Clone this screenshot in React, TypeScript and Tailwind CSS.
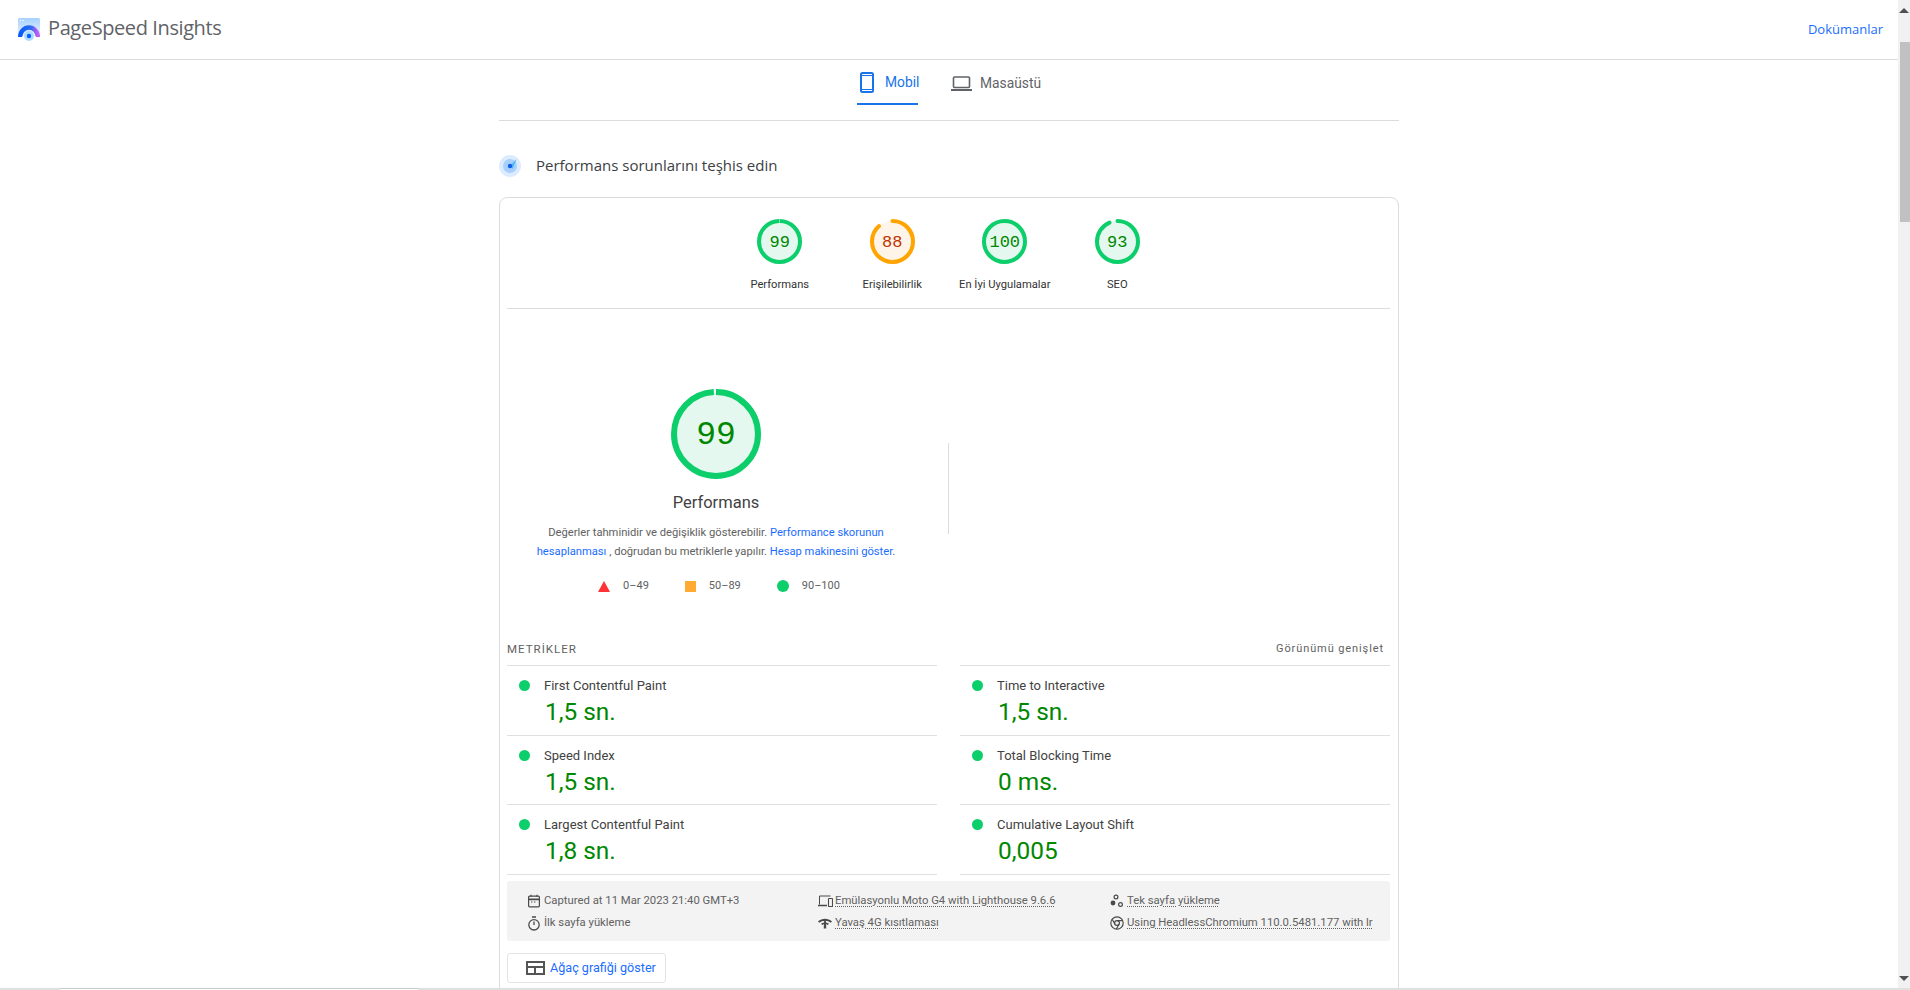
import type { ReactNode } from "react";

const GREEN = "#0cce6b";
const ORANGE = "#ffa400";

interface GaugeProps {
  score: number;
  size: number;
  stroke: number;
  fill: string;
  color: string;
  textClass: string;
}

function Gauge({ score, size, stroke, fill, color, textClass }: GaugeProps) {
  const r = (size - stroke) / 2;
  const c = 2 * Math.PI * r;
  const len = (score / 100) * c;
  const mid = size / 2;
  // only the lower scores have a gap big enough to show the round caps
  const cap = score < 95 ? "round" : "butt";
  return (
    <div className="grid place-items-center" style={{ width: size, height: size }}>
      <svg width={size} height={size} className="col-start-1 row-start-1">
        <circle cx={mid} cy={mid} r={r} fill={fill} stroke="none" />
        <g transform={`rotate(-90 ${mid} ${mid})`}>
          <circle
            cx={mid}
            cy={mid}
            r={r}
            fill="none"
            stroke={color}
            strokeWidth={stroke}
            strokeLinecap={cap}
            strokeDasharray={`${len} ${c}`}
          />
        </g>
      </svg>
      <span className={`col-start-1 row-start-1 font-['Liberation_Mono',monospace] ${textClass}`}>{score}</span>
    </div>
  );
}

function Logo() {
  return (
    <svg width="23" height="23" viewBox="0 0 23 23" className="shrink-0">
      <defs>
        <linearGradient id="top" x1="0" y1="0" x2="0" y2="1">
          <stop offset="0" stopColor="#a5d2ff" />
          <stop offset="1" stopColor="#e8f3ff" />
        </linearGradient>
        <linearGradient id="arc" x1="0" y1="0" x2="1" y2="0">
          <stop offset="0" stopColor="#0a5cff" />
          <stop offset="0.6" stopColor="#2a6cf0" />
          <stop offset="1" stopColor="#c45cf5" />
        </linearGradient>
      </defs>
      <path d="M0 1.500A1.500 1.500 0 0 1 1.500 0h19A1.500 1.500 0 0 1 22 1.500V18H0z" fill="url(#top)" />
      <circle cx="2.500" cy="2.500" r="0.700" fill="#fff" />
      <circle cx="5" cy="2.500" r="0.700" fill="#fff" />
      <path d="M2.200 19a8.800 9.500 0 0 1 17.600 0" fill="none" stroke="url(#arc)" strokeWidth="4.400" />
      <rect x="4.400" y="18" width="13.200" height="5" fill="#fff" />
      <circle cx="11" cy="18" r="5" fill="#a9dcff" />
      <circle cx="11" cy="18" r="2.200" fill="#0a5cff" />
    </svg>
  );
}

function PhoneIcon() {
  return (
    <svg width="14" height="21" viewBox="0 0 14 21" fill="none" stroke="#1a73e8" className="shrink-0">
      <rect x="1" y="1" width="12" height="19" rx="1.500" strokeWidth="2" />
      <path d="M1 3.500h12M1 17.500h12" strokeWidth="1" />
    </svg>
  );
}

function LaptopIcon() {
  return (
    <svg width="21" height="15" viewBox="0 0 21 15" fill="none" className="shrink-0">
      <rect x="2.500" y="1" width="16" height="10.500" rx="1" stroke="#5f6368" strokeWidth="1.600" />
      <rect x="0" y="13" width="21" height="2" fill="#5f6368" />
    </svg>
  );
}

function DiagnoseIcon() {
  return (
    <svg width="22" height="22" viewBox="0 0 22 22" className="shrink-0">
      <circle cx="11" cy="11" r="11" fill="#dcecfe" />
      <circle cx="11" cy="11" r="7" fill="#a9d0fb" />
      <path d="M11 11L17.500 4 13.500 14z" fill="#4db4f7" />
      <circle cx="11" cy="11" r="2.200" fill="#0b5fe8" />
    </svg>
  );
}

function CalendarIcon() {
  return (
    <svg width="14" height="14" viewBox="0 0 14 14" fill="none" stroke="#4a4a4a" strokeWidth="1.200">
      <rect x="1.600" y="2.200" width="10.800" height="10.600" rx="1" />
      <path d="M1.600 5.400h10.800" strokeWidth="1.600" />
      <path d="M4 .800v2M10 .800v2" />
      <path d="M4 8h1.400M7 8h1.400" />
    </svg>
  );
}

function TimerIcon() {
  return (
    <svg width="14" height="15" viewBox="0 0 14 15" fill="none" stroke="#4a4a4a" strokeWidth="1.300">
      <circle cx="7" cy="8.800" r="5.200" />
      <path d="M5 1h4M7 5.600v3.400" />
    </svg>
  );
}

function DevicesIcon() {
  return (
    <svg width="15" height="12" viewBox="0 0 15 12" fill="none" stroke="#4a4a4a">
      <path d="M1.500 9.500V1h11" strokeWidth="1" />
      <path d="M0 10.500h9" strokeWidth="1.300" />
      <rect x="10.500" y="3.500" width="4" height="8" rx=".5" strokeWidth="1.100" />
    </svg>
  );
}

function WifiIcon() {
  return (
    <svg width="14" height="12" viewBox="0 0 14 12" fill="#4a4a4a">
      <path d="M0 4.600C3.800.8 10.200.8 14 4.600l-1.200 1.200C9.600 3 4.400 3 1.200 5.800z" />
      <path d="M3 6.800c2.400-1.900 5.600-1.900 8 0l-1.300 1.100C8 6.700 6 6.700 4.300 7.900z" />
      <path d="M6.200 2.500h1.600l.5 9H5.700z" />
    </svg>
  );
}

function SessionIcon() {
  return (
    <svg width="14" height="14" viewBox="0 0 14 14" fill="none" stroke="#4a4a4a" strokeWidth="1.200">
      <circle cx="6" cy="3" r="1.900" />
      <circle cx="3" cy="9" r="2.400" fill="#4a4a4a" stroke="none" />
      <circle cx="10.500" cy="10.500" r="1.900" />
    </svg>
  );
}

function ChromeIcon() {
  return (
    <svg width="14" height="14" viewBox="0 0 14 14" fill="none" stroke="#4a4a4a" strokeWidth="1.200">
      <circle cx="7" cy="7" r="6.200" />
      <circle cx="7" cy="7" r="2.400" />
      <path d="M7 4.600h5.600M4.900 8.200L2.200 3.300M9.100 8.200L6.300 13" />
    </svg>
  );
}

function TreemapIcon() {
  return (
    <svg width="19" height="14" viewBox="0 0 19 14" fill="none" stroke="#555" strokeWidth="2">
      <rect x="1" y="1" width="17" height="12" />
      <path d="M1 6h17M9 6v7" />
    </svg>
  );
}

const categories = [
  { score: 99, label: "Performans", fill: "#e5f8ef", color: GREEN, text: "text-[#008800]" },
  { score: 88, label: "Erişilebilirlik", fill: "#fff4e8", color: ORANGE, text: "text-[#c33300]" },
  { score: 100, label: "En İyi Uygulamalar", fill: "#e5f8ef", color: GREEN, text: "text-[#008800]" },
  { score: 93, label: "SEO", fill: "#e5f8ef", color: GREEN, text: "text-[#008800]" },
];

const metrics = [
  { name: "First Contentful Paint", value: "1,5 sn." },
  { name: "Time to Interactive", value: "1,5 sn." },
  { name: "Speed Index", value: "1,5 sn." },
  { name: "Total Blocking Time", value: "0 ms." },
  { name: "Largest Contentful Paint", value: "1,8 sn." },
  { name: "Cumulative Layout Shift", value: "0,005" },
];

function InfoItem({ icon, text, dotted }: { icon: ReactNode; text: string; dotted?: boolean }) {
  return (
    <div className="flex items-center h-[22px]">
      <span className="w-[17px] flex items-center shrink-0">{icon}</span>
      <span className={`whitespace-nowrap ${dotted ? "underline decoration-dotted underline-offset-2" : ""}`}>{text}</span>
    </div>
  );
}

export default function App() {
  return (
    <div className="w-[1910px] h-[990px] overflow-hidden flex flex-col bg-white font-['Roboto',sans-serif]">
      <div className="flex flex-1 min-h-0">
        <div className="flex-1 min-w-0 overflow-hidden">
          <header className="h-[60px] border-b border-[#dadce0] flex items-center pl-[18px] pr-[15px]">
            <Logo />
            <span className="ml-[7px] -mt-[3px] text-[20px] text-[#5f6368] font-['Open_Sans',sans-serif] tracking-[-0.4px]">PageSpeed Insights</span>
            <a className="ml-auto text-[13px] font-medium text-[#1a6dff] font-['Open_Sans',sans-serif]">Dokümanlar</a>
          </header>

          <div className="w-[900px] mx-auto">
            <nav className="h-[61px] border-b border-[#dadce0] flex justify-center">
              <div className="flex items-start gap-[33px]">
                <div className="w-[61px] h-[45px] border-b-2 border-[#1a73e8] flex items-center gap-[11px] pl-[3px] pt-[1px]">
                  <PhoneIcon />
                  <span className="text-[13.800px] text-[#1a73e8]">Mobil</span>
                </div>
                <div className="h-[45px] flex items-center gap-[8px] pt-[1px]">
                  <LaptopIcon />
                  <span className="text-[13.800px] text-[#5f6368]">Masaüstü</span>
                </div>
              </div>
            </nav>

            <div className="h-[76px] flex items-center pt-[13px]">
              <DiagnoseIcon />
              <span className="ml-[15px] text-[15px] text-[#3c4043] font-['Open_Sans',sans-serif]">Performans sorunlarını teşhis edin</span>
            </div>

            <section className="border border-[#dadce0] rounded-lg pl-[7px] pr-[8px] h-[900px]">
              <div className="h-[111px] border-b border-[#dadce0] flex justify-center pt-[21px]">
                <div className="flex">
                  {categories.map((cat) => (
                    <div key={cat.label} className="w-[112.500px] flex flex-col items-center">
                      <Gauge score={cat.score} size={45} stroke={4} fill={cat.fill} color={cat.color} textClass={`pt-[2px] text-[17px] ${cat.text}`} />
                      <span className="mt-[13px] text-[11.200px] text-[#333333] whitespace-nowrap">{cat.label}</span>
                    </div>
                  ))}
                </div>
              </div>

              <div className="flex items-start pt-[80px] h-[330px]">
                <div className="w-[418px] flex flex-col items-center shrink-0">
                  <Gauge score={99} size={90} stroke={6} fill="#e5f8ef" color={GREEN} textClass="pt-[4px] text-[33px] text-[#008800]" />
                  <h2 className="mt-[14px] text-[16.500px] leading-[20px] text-[#424242]">Performans</h2>
                  <div className="mt-[10px] text-[11.200px] leading-[19px] text-[#616161] text-center whitespace-nowrap">
                    <p>
                      Değerler tahminidir ve değişiklik gösterebilir. <a className="text-[#1a6dff]">Performance skorunun</a>
                    </p>
                    <p>
                      <a className="text-[#1a6dff]">hesaplanması</a> , doğrudan bu metriklerle yapılır. <a className="text-[#1a6dff]">Hesap makinesini göster</a>.
                    </p>
                  </div>
                  <div className="mt-[17px] ml-[6px] flex items-center text-[11px] text-[#616161]">
                    <span className="w-0 h-0 border-x-[6px] border-x-transparent border-b-[11px] border-b-[#ff3333]" />
                    <span className="ml-[13px]">0–49</span>
                    <span className="ml-[36px] w-[11px] h-[11px] bg-[#ffaa33]" />
                    <span className="ml-[13px]">50–89</span>
                    <span className="ml-[36px] w-[12px] h-[12px] rounded-full bg-[#0cce6b]" />
                    <span className="ml-[13px]">90–100</span>
                  </div>
                </div>
                <div className="ml-[23px] mt-[54px] w-px h-[91px] bg-[#dadce0]" />
              </div>

              <div className="flex justify-between items-center h-[26px] pb-[5px] pr-[6px] text-[#616161]">
                <span className="text-[11.500px] tracking-[1px]">METRİKLER</span>
                <span className="text-[11px] tracking-[0.9px]">Görünümü genişlet</span>
              </div>

              <div className="grid grid-cols-2 gap-x-[23px]">
                {metrics.map((m) => (
                  <div key={m.name} className="h-[69.700px] border-t border-[#e0e0e0] pt-[11px] pl-[12px] flex">
                    <span className="mt-[3px] w-[11px] h-[11px] rounded-full bg-[#0cce6b] shrink-0" />
                    <div className="ml-[14px]">
                      <div className="text-[13px] leading-[18px] text-[#424242]">{m.name}</div>
                      <div className="mt-[3px] ml-px text-[24.400px] leading-[28px] text-[#008800]">{m.value}</div>
                    </div>
                  </div>
                ))}
              </div>

              <div className="grid grid-cols-2 gap-x-[23px] h-[7px]">
                <div className="border-t border-[#e0e0e0]" />
                <div className="border-t border-[#e0e0e0]" />
              </div>

              <div className="h-[60px] bg-[#f3f3f3] rounded-[3px] pt-[9px] pb-[7px] text-[11.300px] text-[#616161] grid grid-cols-[291px_292px_1fr] pl-[20px] overflow-hidden">
                <InfoItem icon={<CalendarIcon />} text="Captured at 11 Mar 2023 21:40 GMT+3" />
                <InfoItem icon={<DevicesIcon />} text="Emülasyonlu Moto G4 with Lighthouse 9.6.6" dotted />
                <InfoItem icon={<SessionIcon />} text="Tek sayfa yükleme" dotted />
                <InfoItem icon={<TimerIcon />} text="İlk sayfa yükleme" />
                <InfoItem icon={<WifiIcon />} text="Yavaş 4G kısıtlaması" dotted />
                <InfoItem icon={<ChromeIcon />} text="Using HeadlessChromium 110.0.5481.177 with lr" dotted />
              </div>

              <button className="mt-[12px] w-[159px] h-[30px] border border-[#e4e4e4] rounded-[3px] flex items-center pl-[18px] gap-[5px] text-[12.600px] text-[#1a6dff]">
                <TreemapIcon />
                <span>Ağaç grafiği göster</span>
              </button>
            </section>
          </div>
        </div>

        <aside className="w-[12px] bg-[#f1f1f1] flex flex-col items-end shrink-0">
          <div className="h-[42px] w-full flex justify-center pt-[8px]">
            <span className="w-0 h-0 border-x-[5px] border-x-transparent border-b-[5px] border-b-[#505050]" />
          </div>
          <div className="h-[180px] w-[10px] bg-[#c1c1c1]" />
          <div className="mt-auto h-[12px] w-full flex justify-center">
            <span className="w-0 h-0 border-x-[5px] border-x-transparent border-t-[5px] border-t-[#505050]" />
          </div>
        </aside>
      </div>
      <div className="h-[2px] bg-[#e0e0e0] shrink-0 flex">
        <div className="ml-[60px] w-[358px] bg-white border-t border-[#c8c8c8]" />
      </div>
    </div>
  );
}
